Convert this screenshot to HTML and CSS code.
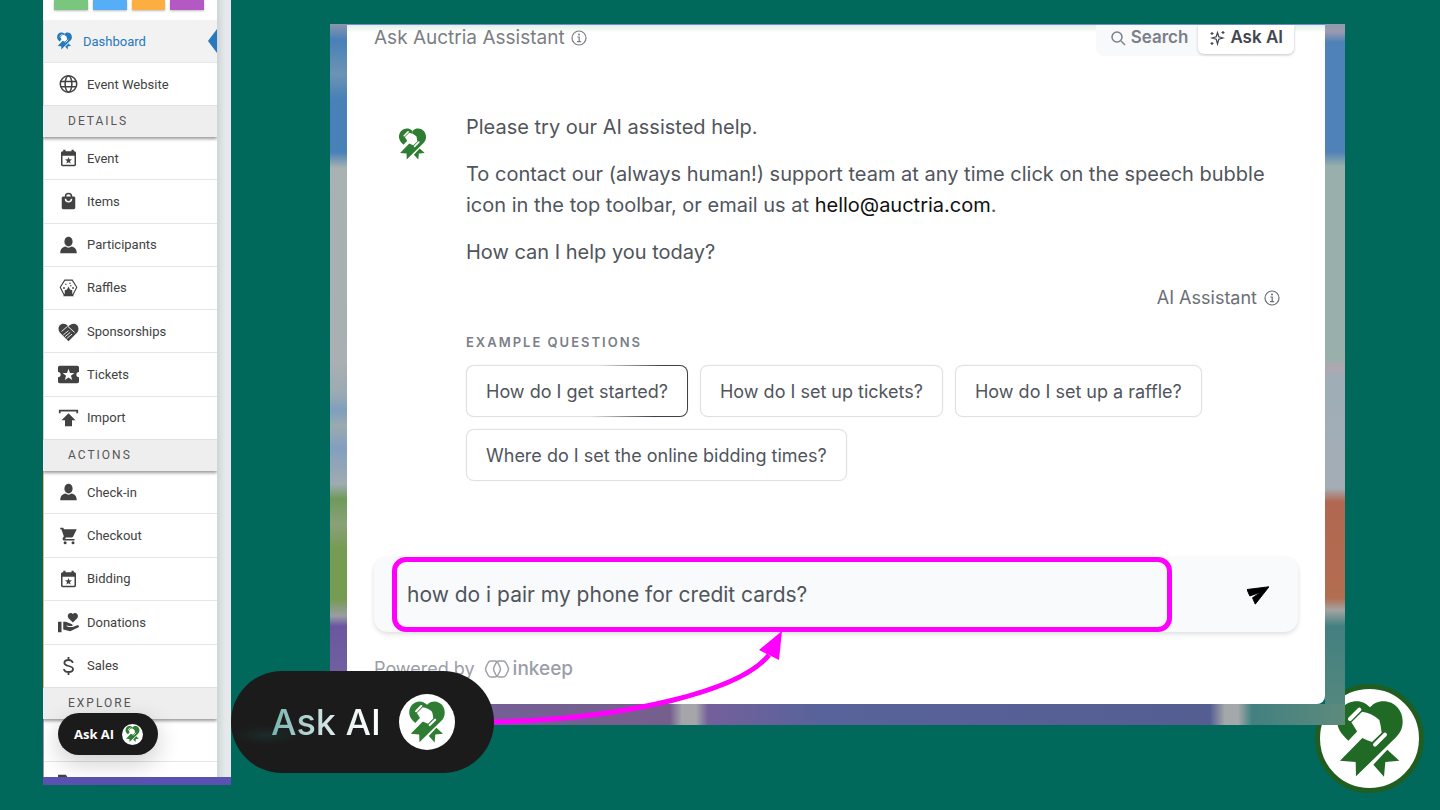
FILE: index.html
```html
<!DOCTYPE html>
<html lang="en">
<head>
    <meta charset="UTF-8">
    <meta name="viewport" content="width=device-width, initial-scale=1.0">
    <title>Ask Auctria Assistant</title>
    <link rel="stylesheet" href="styles.css">
</head>
<body>
    <svg class="sprite" aria-hidden="true">
        <symbol id="mark" viewBox="60 44 210 238">
            <path fill="currentColor" d="M165 68C178 54 192 50 205 50c35 0 58 28 58 60 0 22-8 35-20 48L123 275l-1-43-47-4 67-68 22-30z"/>
            <path fill="currentColor" d="M165 68C150 54 138 50 125 50c-35 0-58 28-58 60 0 22 10 36 33 58l27-28 38-10z"/>
            <path fill="currentColor" d="M217 195l36 33-42 4-4 44-32-36z"/>
            <path fill="#fff" d="M141 81q30 4 52 25 5 18 7 38l-29 28q-13-4-29-12l-15-18q-8-14-18-29z"/>
            <path stroke="currentColor" stroke-width="19" stroke-linecap="round" d="M105 103l28-28M180 180l30-30"/>
            <path stroke="#fff" stroke-width="12" stroke-linecap="round" d="M105 103l28-28M180 180l30-30"/>
        </symbol>
        <symbol id="person" viewBox="0 0 24 24"><ellipse cx="12" cy="7.500" rx="5.500" ry="6.500"/><path d="M1 23c0-6 3-8 7-9 2.500 2 5.500 2 8 0 4 1 7 3 7 9z"/></symbol>
        <symbol id="calendar" viewBox="0 0 24 24"><path fill-rule="evenodd" d="M5 1h3v2h8V1h3v2h1c1 0 2 1 2 2v16c0 1-1 2-2 2H4c-1 0-2-1-2-2V5c0-1 1-2 2-2h1zM4 9v12h16V9z"/><path d="M12 10.500l1.200 3.200 3.500.2-2.800 2.100 1 3.400-2.900-1.900-2.900 1.900 1-3.400-2.800-2.100 3.500-.2z"/></symbol>
        <symbol id="info" viewBox="0 0 16 16"><circle cx="8" cy="8" r="7" fill="none" stroke="currentColor" stroke-width="1.200"/><path d="M6.300 7h1.900v4.500M6 11.600h4.200" fill="none" stroke="currentColor" stroke-width="1.200"/><circle cx="8" cy="4.500" r="1"/></symbol>
    </svg>

    <div class="slide">
        <aside class="sidebar">
            <div class="menu">
                <div class="swatches">
                    <span class="green"></span><span class="blue"></span><span class="orange"></span><span class="purple"></span>
                </div>
                <ul class="links top">
                    <li><a href="#" class="active"><svg><use href="#mark"/></svg>Dashboard</a></li>
                    <li><a href="#"><svg class="line" viewBox="0 0 24 24" stroke-width="2"><circle cx="12" cy="12" r="11"/><ellipse cx="12" cy="12" rx="4.500" ry="11"/><path d="M2 8.500h20M2 15.500h20"/></svg>Event Website</a></li>
                </ul>
                <h2>DETAILS</h2>
                <ul class="links details">
                    <li><a href="#"><svg><use href="#calendar"/></svg>Event</a></li>
                    <li><a href="#"><svg viewBox="0 0 24 24"><path fill-rule="evenodd" d="M19 6h-2A5 5 0 0 0 7 6H5c-1.500 0-2 1-2 2v13c0 1 .8 2 2 2h14c1.200 0 2-1 2-2V8c0-1-.5-2-2-2zm-7-3a3 3 0 0 1 3 3H9a3 3 0 0 1 3-3zm0 11a5 5 0 0 1-5-5h2a3 3 0 0 0 6 0h2a5 5 0 0 1-5 5z"/></svg>Items</a></li>
                    <li><a href="#"><svg><use href="#person"/></svg>Participants</a></li>
                    <li><a href="#"><svg viewBox="0 0 24 24"><path d="M7 1.500h10l6 9.500-5 10H6L1 11z" fill="none" stroke="currentColor" stroke-width="1.500"/><circle cx="8.500" cy="7" r="1"/><circle cx="14" cy="5.500" r="1"/><circle cx="15" cy="9" r="1"/><circle cx="6" cy="12" r="1.200"/><circle cx="18" cy="12" r="1.200"/><path d="M12 10l2 4 3 1v4l2 4H5l2-4v-4l3-1z"/></svg>Raffles</a></li>
                    <li><a href="#"><svg viewBox="0 0 24 24" class="wide"><path d="M12 23L2 13C-1 9 1 3 6 3c3 0 4 1 6 3 2-2 3-3 6-3 5 0 7 6 4 10z"/><path d="M4 12l7-6 8 7M6 16l6-5M8 18l6-5M10 20l6-5" fill="none" stroke="#fff" stroke-width="1"/></svg>Sponsorships</a></li>
                    <li><a href="#"><svg viewBox="0 0 24 20" class="wide"><path fill-rule="evenodd" d="M2 0h20c1 0 2 1 2 2v5a3 3 0 0 0 0 6v5c0 1-1 2-2 2H2c-1 0-2-1-2-2v-5a3 3 0 0 0 0-6V2c0-1 1-2 2-2zm10 3.500l-1.700 4.700-5 .2 3.900 3.100-1.400 4.800 4.200-2.800 4.200 2.800-1.400-4.800 3.900-3.100-5-.2z"/></svg>Tickets</a></li>
                    <li><a href="#"><svg viewBox="0 0 24 24" class="wide"><path d="M1 7V3h22v4h-2V5H3v2zM12 7l8 8h-4v7H8v-7H4z"/></svg>Import</a></li>
                </ul>
                <h2>ACTIONS</h2>
                <ul class="links actions">
                    <li><a href="#"><svg><use href="#person"/></svg>Check-in</a></li>
                    <li><a href="#"><svg viewBox="0 0 24 24"><path d="M1 1h4l1 2h17l-5 10c-.4.700-1 1-1.700 1H8.500l-1 2H20v2H6c-1.500 0-2.500-1.500-1.700-3l1.500-2.600L2.500 3H1z"/><circle cx="7.500" cy="21" r="2"/><circle cx="18" cy="21" r="2"/></svg>Checkout</a></li>
                    <li><a href="#"><svg><use href="#calendar"/></svg>Bidding</a></li>
                    <li><a href="#"><svg viewBox="0 0 24 24" class="wide"><path d="M0 11h4v12H0zM6 11h3l7 3c1 .5 1 2 0 2h-4l-2-.8-.3.800 2.300 1h5l5-2c2 0 2.500 1.500 1.500 2.500L14 22l-8-2zM17 12l-5-5c-2-3 0-6 2.500-6 1 0 2 .5 2.500 1.300C17.500 1.500 18.500 1 19.500 1 22 1 24 4 22 7z"/></svg>Donations</a></li>
                    <li><a href="#"><svg class="line" viewBox="0 0 24 24" stroke-width="2.400"><path d="M17.500 8c0-3-2.500-4-5.500-4S6.500 5 6.500 8c0 5 11.500 3 11.500 8 0 3-3 4-6 4s-6-1-6-4M12 0v4M12 20v4"/></svg>Sales</a></li>
                </ul>
                <h2>EXPLORE</h2>
                <ul class="links explore">
                    <li><a href="#" aria-label="Reports"><svg viewBox="0 0 24 24"><path d="M3 23L14 10l3 3z"/></svg></a></li>
                    <li><a href="#" aria-label="Files"><svg viewBox="0 0 24 24" class="wide"><path d="M0 2h9l2 3h13v15H0z"/></svg></a></li>
                </ul>
            </div>
            <button class="ask ask-small" type="button">Ask AI <span class="badge"><svg><use href="#mark"/></svg></span></button>
        </aside>

        <main class="stage">
            <section class="card">
                <header class="card-head">
                    <h1>Ask Auctria Assistant <svg class="info"><use href="#info"/></svg></h1>
                    <div class="tabs">
                        <button type="button"><svg class="line" viewBox="0 0 16 16" stroke-width="1.500"><circle cx="7" cy="7" r="5"/><path d="M11 11l4 4"/></svg>Search</button>
                        <button type="button" class="on"><svg class="line" viewBox="0 0 16 16" stroke-width="1.200"><path d="M8.500 2.500l1.300 4.200 4.200 1.300-4.200 1.300-1.300 4.700-1.300-4.700L3 8l4.200-1.300zM3 2v3M1.500 3.500h3M14 1v3M12.500 2.500h3M3 12v3M1.500 13.500h3"/></svg>Ask AI</button>
                    </div>
                </header>

                <div class="message">
                    <svg class="avatar"><use href="#mark"/></svg>
                    <div class="body">
                        <p>Please try our AI assisted help.</p>
                        <p>To contact our (always human!) support team at any time click on the speech bubble icon in the top toolbar, or email us at <a href="mailto:hello@auctria.com">hello@auctria.com</a>.</p>
                        <p>How can I help you today?</p>
                        <p class="by">AI Assistant <svg class="info"><use href="#info"/></svg></p>
                        <h3>EXAMPLE QUESTIONS</h3>
                        <div class="chips">
                            <button type="button" class="lit">How do I get started?</button>
                            <button type="button">How do I set up tickets?</button>
                            <button type="button">How do I set up a raffle?</button>
                            <button type="button">Where do I set the online bidding times?</button>
                        </div>
                    </div>
                </div>

                <form class="prompt">
                    <input type="text" aria-label="Your question" value="how do i pair my phone for credit cards?">
                    <button type="button" aria-label="Send"><svg viewBox="0 0 24 20"><path d="M0 4L24 1 9 20 6 13l9-6-12 4z" stroke="currentColor" stroke-linejoin="round"/></svg></button>
                </form>

                <footer class="powered">
                    <span>Powered by</span>
                    <svg class="line" viewBox="0 0 26 18" stroke-width="1.500"><path d="M7 1h4q2 0 3 2l2 4q1 2 0 4l-2 4q-1 2-3 2H7q-2 0-3-2l-2-4q-1-2 0-4l2-4q1-2 3-2z"/><path d="M15 1h4q2 0 3 2l2 4q1 2 0 4l-2 4q-1 2-3 2h-4q-2 0-3-2l-2-4q-1-2 0-4l2-4q1-2 3-2z"/></svg>
                    <strong>inkeep</strong>
                </footer>
            </section>
            <svg class="arrow" viewBox="0 0 300 100" aria-hidden="true">
                <path d="M4 94C140 91 252 62 280 27" fill="none" stroke="#f0f" stroke-width="5"/>
                <path d="M293 3l-23 19 20 10z" fill="#f0f"/>
            </svg>
        </main>

        <button class="ask ask-large" type="button"><span class="glow">Ask AI</span><span class="badge"><svg><use href="#mark"/></svg></span></button>
        <div class="seal"><svg><use href="#mark"/></svg></div>
    </div>
</body>
</html>
```

FILE: styles.css
```css
* { box-sizing: border-box; }
body { margin: 0; background: #00695c; font-family: Inter, "Liberation Sans", sans-serif; color: #50555c; }
h1, h2, h3, p, ul { margin: 0; padding: 0; font-weight: 400; }
ul { list-style: none; }
a { color: inherit; text-decoration: none; }
button { font: inherit; color: inherit; border: 0; background: none; padding: 0; cursor: pointer; }
svg { fill: currentColor; flex: none; }
svg.line { fill: none; stroke: currentColor; }
.sprite { position: absolute; width: 0; height: 0; }

.slide { position: relative; display: flex; gap: 99px; align-items: flex-start; min-height: 100vh; padding: 0 95px 0 43px; overflow: hidden; }

/* sidebar */
.sidebar { position: relative; flex: none; width: 188px; height: calc(100vh - 25px); padding-right: 14px; background: linear-gradient(90deg, #cfd4d8 174px, #e5e9eb 182px); border-bottom: 8px solid #5b51b0; font-family: Roboto, sans-serif; font-size: 13px; color: #424242; }
.menu { height: 100%; overflow: hidden; background: #fff; }
.swatches { display: flex; gap: 5px; height: 20px; padding: 0 13px 10px 11px; }
.swatches span { flex: 1; box-shadow: 0 1px 2px #0004; }
.green { background: #7bc67e; }
.blue { background: #57aef8; }
.orange { background: #fcae41; }
.purple { background: #b458c4; }
.links { display: grid; grid-auto-rows: 1fr; border-left: 1px solid #d7d9e6; }
.links li { border-bottom: 1px solid #e6e6e6; }
.top { min-height: 86px; }
.details { min-height: 303px; border-color: #c3e0c6; }
.actions { min-height: 217px; border-color: #f5b580; }
.explore { min-height: 86px; border-color: #a58fc4; }
.links a { position: relative; display: flex; align-items: center; height: 100%; padding-left: 14px; gap: 8px; }
.links svg { width: 21px; height: 18px; }
.links svg.wide { width: 21px; height: 21px; }
.links .active { gap: 8px; padding-left: 10px; background: #f2f2f2; color: #2778bd; }
.links .active::after { content: ""; position: absolute; right: 0; border: solid transparent; border-width: 12px 9px 12px 0; border-right-color: #2778bd; }
.menu h2 { position: relative; height: 31px; padding-left: 25px; background: #eee; box-shadow: 0 2px 3px #0006; font-size: 12px; line-height: 31px; letter-spacing: 2px; color: #555; }

/* ask buttons */
.ask { display: flex; align-items: center; background: #1b1b1b; color: #fff; border-radius: 60px; }
.badge { display: flex; align-items: center; justify-content: center; background: #fff; border-radius: 50%; color: #2e7d32; }
.ask-small { position: absolute; left: 15px; bottom: 22px; width: 100px; height: 42px; padding-left: 16px; gap: 8px; font: 700 13px "Open Sans", sans-serif; box-shadow: 0 8px 24px #0003; }
.ask-small .badge { width: 21px; height: 21px; }
.ask-small .badge svg { width: 15px; height: 18px; }
.ask-large { position: absolute; z-index: 2; left: 231px; bottom: 37px; width: 263px; height: 102px; padding-left: 40px; gap: 18px; background: #1b1b1b radial-gradient(ellipse at 36px 64px, #1b2b29, #1b1b1b 34px); font-size: 36px; font-weight: 500; }
.ask-large .badge { width: 56px; height: 56px; }
.ask-large .badge svg { width: 38px; height: 46px; }
.glow { background: linear-gradient(90deg, #76b3ad, #e2eded 60%, #fff); background-clip: text; -webkit-background-clip: text; color: transparent; }

/* blurred app behind the chat card */
.stage { position: relative; z-index: 1; flex: 1; min-width: 0; margin-top: 24px; padding: 0 20px 21px 17px;
    background:
        linear-gradient(90deg, #725f9d, #75608c 340px, #a5a5aa 352px, #a5a5aa 366px, #74609b 378px, #58639b 490px, #555e91 880px, #a5a8aa 895px, #a5a8aa 908px, #438080 922px, #5d8b7c) left bottom / 100% 21px no-repeat,
        linear-gradient(#8b96ab, #4880b8 16px, #6b94b4 50px, #4880b8 75px, #4880b8 128px, #a8b2b2 144px, #a9afb2 340px, #9aaab4 370px, #7f9fbd 386px, #9aaab0 402px, #839fbe 424px, #9fabb1 460px, #6f995b 475px, #8aa178 500px, #769b52 525px, #769b52 575px, #999da4 592px, #6a57a0 602px, #7968a0) left top / 17px 100% no-repeat,
        linear-gradient(#8f9bb0, #999ab0 8px, #4f82b8 18px, #4f82b8 128px, #98afab 142px, #98afab 334px, #b0a7b0 344px, #9eadb7 354px, #a4adb6 464px, #b16751 478px, #b36d50 574px, #a2a3a2 586px, #448080 602px, #55897d) right top / 20px 100% no-repeat; }
.card { padding: 0 27px 20px; background: #fff linear-gradient(#e3efe3, #fff) top / 100% 8px no-repeat; border-top: 1px solid #6a90d8; border-radius: 0 0 8px 8px; font-size: 20px; line-height: 31px; }
.card-head { display: flex; justify-content: space-between; height: 31px; }
.card-head h1 { display: flex; align-items: center; gap: 6px; height: 25px; font-size: 19px; color: #7b7e83; }
.info { width: 16px; height: 16px; }
.tabs { display: flex; gap: 10px; margin-right: 3px; padding: 0 1px 2px 14px; background: #f8f9fb; border-radius: 0 0 8px 8px; font-size: 17px; font-weight: 600; color: #7b7f87; }
.tabs button { display: flex; align-items: center; gap: 5px; padding-bottom: 4px; }
.tabs svg { width: 16px; height: 16px; }
.tabs .on { padding: 0 11px 4px; background: #fff; border-radius: 0 0 6px 6px; box-shadow: 0 1px 3px #0003; color: #43464d; }

.message { display: flex; gap: 39px; padding: 56px 18px 0 24px; }
.avatar { width: 29px; height: 34px; margin-top: 15px; color: #2e7d32; }
.body { flex: 1; min-width: 0; }
.body p { margin-bottom: 16px; }
.body a { color: #111; }
.body .by { display: flex; justify-content: flex-end; align-items: center; gap: 7px; margin-bottom: 20px; font-size: 18px; line-height: 28px; color: #6b6f76; }
.body h3 { margin-bottom: 12px; font-size: 13px; line-height: 21px; font-weight: 600; letter-spacing: 2px; color: #7b8087; }
.chips { display: flex; flex-wrap: wrap; gap: 12px; font-size: 18px; }
.chips button { height: 52px; padding: 0 19px; border: 1px solid #dfe1e5; border-radius: 8px; box-shadow: 0 0 1px #0003; }
.chips .lit { border-color: transparent; background: linear-gradient(#fff, #fff) padding-box, linear-gradient(100deg, #dfe1e5 58%, #3f4248 85%) border-box; }

.prompt { display: flex; height: 75px; margin-top: 76px; padding-left: 18px; background: #f9fafb; border-radius: 14px; box-shadow: 0 2px 5px #0002; }
.prompt input { flex: 1; min-width: 0; padding: 0 10px; border: 5px solid #f0f; border-radius: 14px; background: transparent; font: inherit; font-size: 21px; color: inherit; outline: 0; }
.prompt button { display: flex; align-items: center; width: 126px; padding-left: 75px; color: #000; }
.prompt svg { width: 22px; height: 20px; }
.powered { display: flex; align-items: center; gap: 9px; margin-top: 21px; font-size: 18px; color: #9b9ea8; }
.powered svg { width: 26px; height: 18px; margin-right: -6px; }
.powered strong { font-size: 19px; font-weight: 500; }

.arrow { position: absolute; left: 159px; top: 604px; width: 300px; height: 100px; overflow: visible; }
.seal { position: absolute; right: 16px; bottom: 17px; display: flex; align-items: center; justify-content: center; width: 109px; height: 109px; border: 5px solid #1f5e20; border-radius: 50%; background: #fff; color: #216a26; }
.seal svg { width: 70px; height: 80px; }
```
